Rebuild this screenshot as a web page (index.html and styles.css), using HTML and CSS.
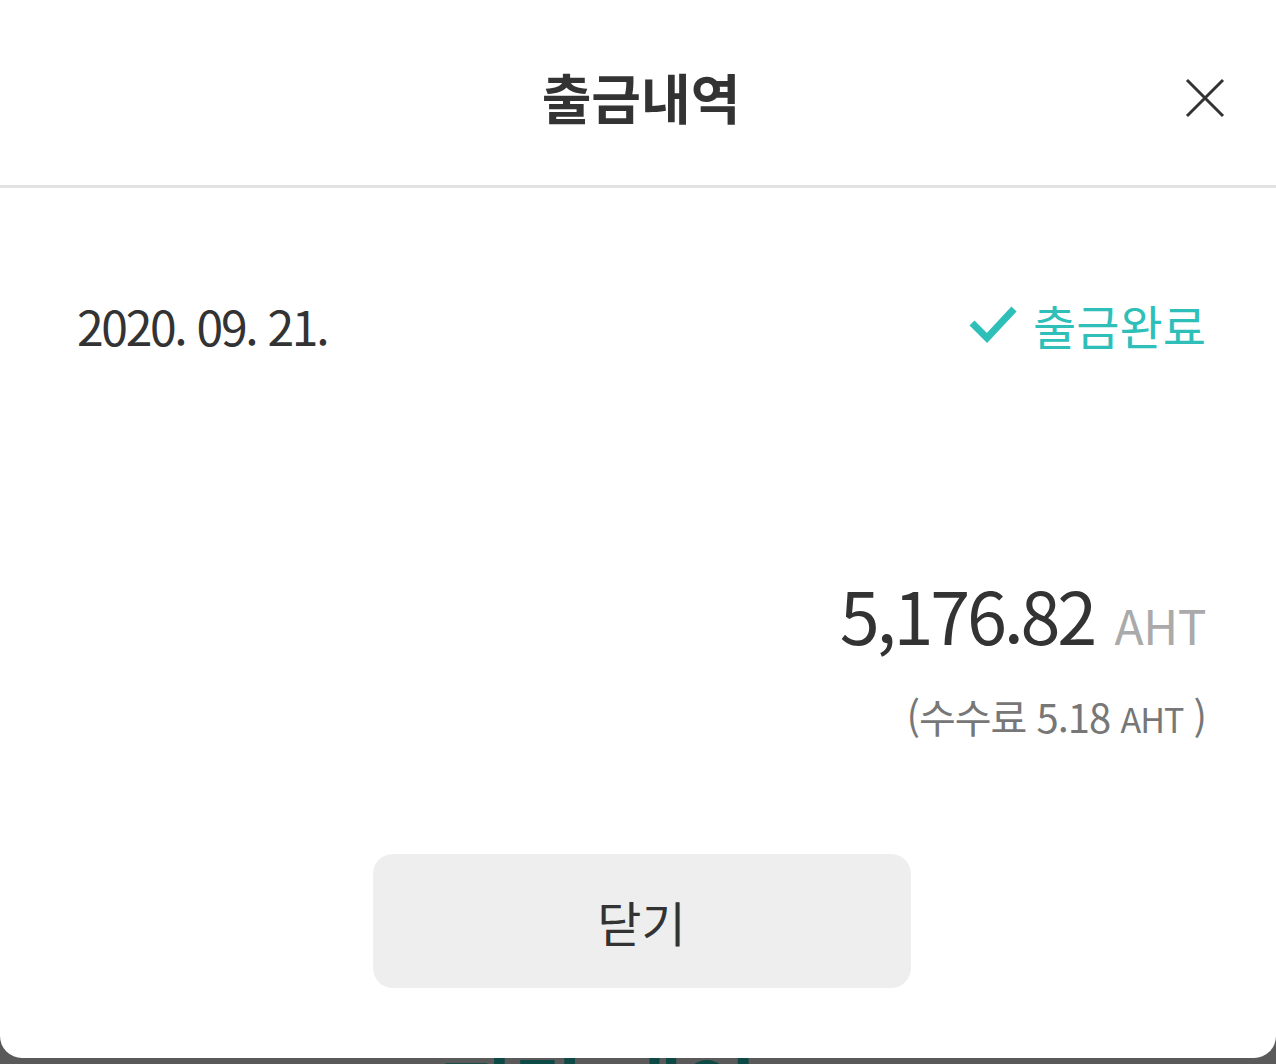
FILE: index.html
```html
<!DOCTYPE html>
<html lang="ko">

<head>
    <meta charset="UTF-8">
    <meta name="viewport" content="width=device-width, initial-scale=1.0">
    <title>출금내역</title>
    <link rel="stylesheet" href="styles.css">
</head>

<body>
    <div class="behind">지갑 내역</div>

    <div class="modal">
        <div class="modal-head">
            <span></span>
            <h1>출금내역</h1>
            <button class="close" type="button" aria-label="닫기">
                <svg viewBox="0 0 40 40" width="40" height="40">
                    <path d="M2 2 L38 38 M38 2 L2 38" stroke="#333" stroke-width="3" fill="none" />
                </svg>
            </button>
        </div>

        <div class="modal-body">
            <div class="row">
                <span class="date">2020. 09. 21.</span>
                <span class="status">
                    <svg viewBox="0 0 48 40" width="48" height="40">
                        <polyline points="3,18 18,33 45,4" stroke="#2fbfb9" stroke-width="7" fill="none" />
                    </svg>
                    출금완료
                </span>
            </div>

            <div class="amount">
                <span class="value">5,176.82</span>
                <span class="unit">AHT</span>
            </div>
            <div class="fee">(수수료 5.18 <small>AHT</small> )</div>

            <button class="btn-close" type="button">닫기</button>
        </div>
    </div>
</body>

</html>
```

FILE: styles.css
```css
* {
    padding: 0;
    margin: 0;
    box-sizing: border-box;
}

html,
body {
    height: 100%;
    background-color: #5a5a5a;
    overflow: hidden;
    position: relative;
    font-family: "Noto Sans CJK KR", "Noto Sans", sans-serif;
    color: #333;
}

/* page under the popup */
.behind {
    position: absolute;
    left: 440px;
    top: 1030px;
    font-size: 80px;
    font-weight: 700;
    color: #0d4a45;
}

.modal {
    position: relative;
    height: 1058px;
    background-color: #fff;
    border-radius: 0 0 22px 22px;
}

.modal-head {
    height: 188px;
    border-bottom: 3px solid #e3e3e3;
    display: grid;
    grid-template-columns: 1fr auto 1fr;
    align-items: center;
    padding: 0 51px 0 57px;
}

.modal-head h1 {
    font-size: 54px;
    font-weight: 700;
    color: #333;
    padding-top: 8px;
}

.close {
    justify-self: end;
    border: none;
    background: none;
    width: 40px;
    height: 40px;
    margin-top: 10px;
}

.close svg {
    display: block;
}

.modal-body {
    padding: 0 70px 0 77px;
    display: flex;
    flex-direction: column;
}

.row {
    display: flex;
    justify-content: space-between;
    align-items: center;
    margin-top: 103px;
    line-height: 68px;
}

.date {
    font-size: 48px;
    letter-spacing: -2.3px;
}

.status {
    display: flex;
    align-items: center;
    gap: 16px;
    font-size: 47px;
    color: #2fbfb9;
}

.status svg {
    display: block;
}

.amount {
    margin-top: 210px;
    text-align: right;
    line-height: 90px;
}

.amount .value {
    font-size: 72px;
    letter-spacing: -3.2px;
}

.amount .unit {
    font-size: 48px;
    color: #aaa;
    margin-left: 16px;
    letter-spacing: -0.5px;
}

.fee {
    text-align: right;
    font-size: 40px;
    color: #777;
    margin-top: 4px;
    letter-spacing: -1px;
}

.fee small {
    font-size: 34px;
}

.btn-close {
    align-self: center;
    width: 538px;
    height: 134px;
    margin-top: 109px;
    border: none;
    border-radius: 20px;
    background-color: #eee;
    font-family: inherit;
    font-size: 48px;
    color: #333;
}
```
